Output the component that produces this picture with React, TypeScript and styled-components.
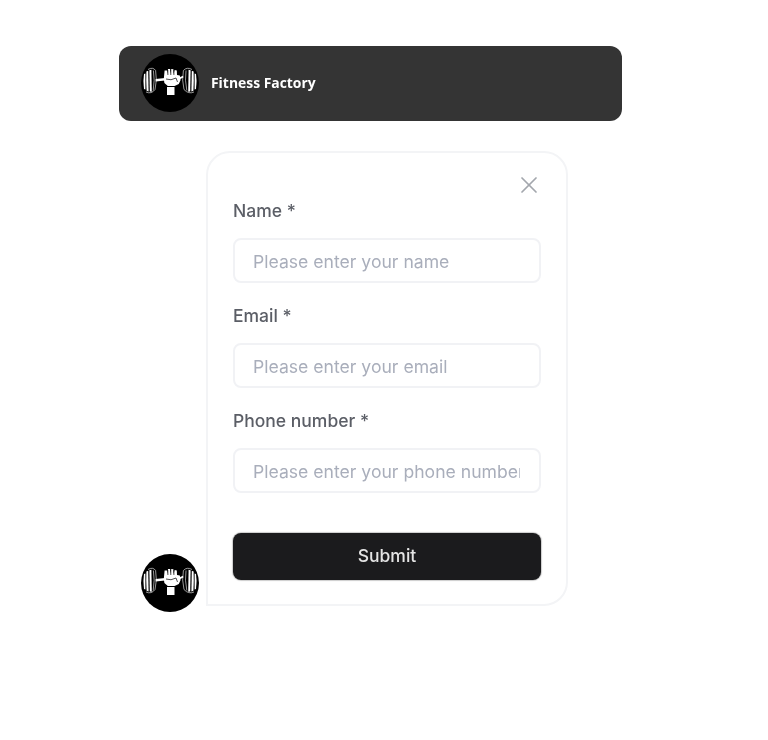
import React from "react";
import styled, { createGlobalStyle } from "styled-components";
import { X } from "lucide-react";

const GlobalStyle = createGlobalStyle`
  * {
    box-sizing: border-box;
  }

  body {
    margin: 0;
    background: #ffffff;
    font-family: "Inter", "Liberation Sans", sans-serif;
  }
`;

const Logo: React.FC = () => (
  <LogoSvg viewBox="0 0 58 58">
    <circle cx="29" cy="29" r="29" fill="#000" />
    {/* left plates */}
    <g fill="#fff">
      <path d="M3 20 Q1.8 27 3 35 L4.4 35.5 L4.4 19.5 Z" />
      <path d="M5.4 17.5 L7.2 16.8 L7.6 37.4 L5.6 36.8 Q5 27 5.4 17.5 Z" />
      <path d="M8.4 16.2 L10.4 15.8 L10.8 37.8 L8.8 37.6 Z" />
    </g>
    <g fill="none" stroke="#fff" strokeWidth="0.6">
      <path d="M7 15.5 Q12 12.6 14.6 16.5 Q16.4 26 14 35.5 Q10.5 40.5 5 38" />
      <path d="M12.4 16.5 Q14 26 12.2 36.5" />
    </g>
    {/* right plates */}
    <g fill="#fff">
      <path d="M55 20 Q56.2 27 55 35 L53.6 35.5 L53.6 19.5 Z" />
      <path d="M52.6 17.5 L50.8 16.8 L50.4 37.4 L52.4 36.8 Q53 27 52.6 17.5 Z" />
      <path d="M49.6 16.2 L47.6 15.8 L47.2 37.8 L49.2 37.6 Z" />
    </g>
    <g fill="none" stroke="#fff" strokeWidth="0.6">
      <path d="M51 15.5 Q46 12.6 42.4 16.5 Q40.6 26 43 35.5 Q47.5 40.5 53 38" />
      <path d="M45 16.5 Q43.6 26 45.8 36.5" />
    </g>
    {/* bar */}
    <path d="M14.6 25 L24 24 L24 26.4 L14.6 27.4 Z" fill="#fff" />
    <path d="M38 23.5 L42 21.8 L42.4 23.4 L38.4 25.4 Z" fill="#fff" />
    {/* fist */}
    <path
      d="M23.6 16.5 L26 16.5 L26.4 20 L27 15 L29.2 15 L29.4 20 L30.2 15 L32.4 15.2 L32.6 20 L33.6 16 L35.8 16.4 L36 21 L38.8 21.6 L39.6 26 L37.8 30 L33.6 32 L26.8 32 L23.4 29 L22.8 25 Z"
      fill="#fff"
    />
    <path
      d="M26.8 16 L26.9 21 M29.8 15.5 L29.8 21 M32.9 16 L32.9 21 M25 25 Q30 27 35 24 M35 24 L36.5 28"
      stroke="#000"
      strokeWidth="0.7"
      fill="none"
    />
    {/* wrist */}
    <rect x="26" y="33" width="7.5" height="8" fill="#fff" />
  </LogoSvg>
);

const Field: React.FC<{ label: string; placeholder: string }> = ({
  label,
  placeholder
}) => (
  <FieldWrap>
    <Label>{label}</Label>
    <Input type="text" placeholder={placeholder} />
  </FieldWrap>
);

const App: React.FC = () => {
  return (
    <Page>
      <GlobalStyle />
      <Header>
        <Logo />
        <Title>Fitness Factory</Title>
      </Header>
      <ChatRow>
        <Logo />
        <FormCard>
          <CloseButton type="button" aria-label="Close">
            <X size={28} strokeWidth={1.5} />
          </CloseButton>
          <Fields>
            <Field label="Name *" placeholder="Please enter your name" />
            <Field label="Email *" placeholder="Please enter your email" />
            <Field
              label="Phone number *"
              placeholder="Please enter your phone number"
            />
          </Fields>
          <SubmitButton type="button">Submit</SubmitButton>
        </FormCard>
      </ChatRow>
    </Page>
  );
};

const Page = styled.div`
  width: 768px;
  height: 740px;
  padding: 46px 0 0 119px;
  overflow: hidden;
  filter: blur(0.45px);
`;

const LogoSvg = styled.svg`
  display: block;
  flex: none;
  width: 58px;
  height: 58px;
`;

const Header = styled.div`
  display: flex;
  align-items: center;
  gap: 12px;
  width: 503px;
  height: 75px;
  padding: 0 22px 1px;
  background: #343434;
  border-radius: 12px;
`;

const Title = styled.span`
  margin-bottom: 2px;
  font-family: "Open Sans", sans-serif;
  font-size: 13.9px;
  font-weight: 700;
  color: #ffffff;
`;

const ChatRow = styled.div`
  display: flex;
  align-items: flex-end;
  gap: 7px;
  margin-top: 30px;
  padding-left: 22px;
`;

const FormCard = styled.div`
  position: relative;
  display: flex;
  flex-direction: column;
  gap: 40px;
  width: 362px;
  height: 455px;
  margin-bottom: 6px;
  padding: 46px 25px 24px;
  background: #ffffff;
  border: 2px solid #f3f4f6;
  border-radius: 24px 24px 24px 0;
`;

const CloseButton = styled.button`
  position: absolute;
  top: 18px;
  right: 23px;
  display: flex;
  padding: 0;
  background: none;
  border: none;
  color: #a3a7ad;
`;

const Fields = styled.div`
  display: flex;
  flex-direction: column;
  gap: 21px;
`;

const FieldWrap = styled.div`
  display: flex;
  flex-direction: column;
  gap: 15px;
`;

const Label = styled.label`
  font-size: 17.5px;
  line-height: 24px;
  font-weight: 500;
  color: #5b5e66;
`;

const Input = styled.input`
  width: 100%;
  height: 45px;
  padding: 1px 19px 0 18px;
  font-family: inherit;
  font-size: 17.6px;
  background: #ffffff;
  border: 2px solid #f1f2f5;
  border-radius: 8px;

  &::placeholder {
    color: #a9aebb;
    opacity: 1;
  }
`;

const SubmitButton = styled.button`
  width: 100%;
  height: 47px;
  padding: 0 0 2px;
  font-family: inherit;
  font-size: 17.5px;
  font-weight: 500;
  color: #e4e4e4;
  background: #1b1b1d;
  border: none;
  border-radius: 8px;
  box-shadow: 0 0 1px 1px rgba(0, 0, 0, 0.2);
`;

export default App;
